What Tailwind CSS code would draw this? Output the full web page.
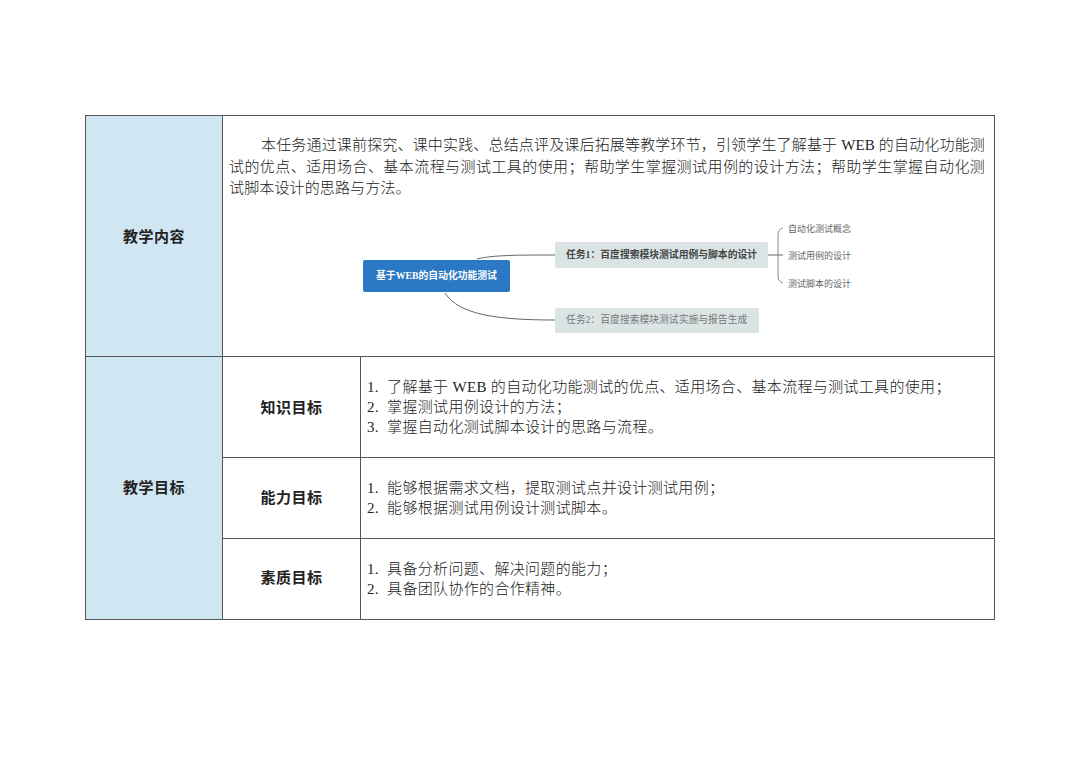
<!DOCTYPE html>
<html lang="zh-CN">
<head>
<meta charset="UTF-8">
<title>教学内容与教学目标</title>
<script src="https://cdn.jsdelivr.net/npm/@tailwindcss/browser@4"></script>
</head>
<body class="bg-white w-[1080px] h-[764px] overflow-hidden text-[#222] font-['Liberation_Serif','Noto_Sans_CJK_SC',serif]">
<div class="pt-[115px] pl-[85px]">
  <table class="w-[910px] table-fixed border-collapse text-[15px] leading-[21.5px]">
    <colgroup>
      <col class="w-[137px]">
      <col class="w-[138px]">
      <col>
    </colgroup>
    <tbody>
      <tr class="h-[241px]">
        <th class="border border-[#555] bg-[#d0e6f3] font-bold text-[15px] tracking-[0.5px] align-middle pt-[3px]">教学内容</th>
        <td colspan="2" class="border border-[#555] align-top p-0">
          <div class="h-[240px] flex flex-col">
            <p class="pt-[19px] pl-[6px] pr-[9px] text-justify indent-[32px] tracking-[0.14px] font-light">本任务通过课前探究、课中实践、总结点评及课后拓展等教学环节，引领学生了解基于 WEB 的自动化功能测试的优点、适用场合、基本流程与测试工具的使用；帮助学生掌握测试用例的设计方法；帮助学生掌握自动化测试脚本设计的思路与方法。</p>
            <!-- mind map -->
            <div class="relative flex-1">
              <svg class="absolute inset-0" width="772" height="175" fill="none" stroke="#666" stroke-width="1">
                <path d="M254 59 C270 55 295 55 332 55"/>
                <path d="M222 93 C236 115 275 120 332 120"/>
                <path d="M545 55 H560"/>
                <path d="M560 28 C556 29 555 32 555 36 V75 C555 79 556 82 560 83" stroke="#888"/>
              </svg>
              <div class="absolute left-[140px] top-[60px] w-[147px] h-[32px] rounded-[2px] bg-[#2b78c4] text-white text-[9.8px] font-bold flex items-center justify-center">基于WEB的自动化功能测试</div>
              <div class="absolute left-[332px] top-[42px] w-[213px] h-[26px] pl-[11px] rounded-[2px] bg-[#dbe4e4] text-[#444] text-[9.8px] font-bold flex items-center">任务1：百度搜索模块测试用例与脚本的设计</div>
              <div class="absolute left-[332px] top-[108px] w-[204px] h-[25px] pl-[11px] rounded-[2px] bg-[#dbe4e4] text-[#777] text-[9.8px] flex items-center">任务2：百度搜索模块测试实施与报告生成</div>
              <span class="absolute left-[565px] top-[22px] text-[9px] leading-[14px] text-[#666]">自动化测试概念</span>
              <span class="absolute left-[565px] top-[49px] text-[9px] leading-[14px] text-[#666]">测试用例的设计</span>
              <span class="absolute left-[565px] top-[77px] text-[9px] leading-[14px] text-[#666]">测试脚本的设计</span>
            </div>
          </div>
        </td>
      </tr>
      <tr class="h-[101px]">
        <th rowspan="3" class="border border-[#555] bg-[#d0e6f3] font-bold tracking-[0.5px] align-middle pt-[2px]">教学目标</th>
        <th class="border border-[#555] font-bold tracking-[0.5px] pt-[3px]">知识目标</th>
        <td class="border border-[#555] pl-[6px] pb-[1px] font-light">
          <ol class="tracking-[0.33px] leading-[20px]">
            <li>1.&nbsp; 了解基于 WEB 的自动化功能测试的优点、适用场合、基本流程与测试工具的使用；</li>
            <li>2.&nbsp; 掌握测试用例设计的方法；</li>
            <li>3.&nbsp; 掌握自动化测试脚本设计的思路与流程。</li>
          </ol>
        </td>
      </tr>
      <tr class="h-[81px]">
        <th class="border border-[#555] font-bold tracking-[0.5px] pt-[1px]">能力目标</th>
        <td class="border border-[#555] pl-[6px] font-light">
          <ol class="tracking-[0.33px] leading-[20px]">
            <li>1.&nbsp; 能够根据需求文档，提取测试点并设计测试用例；</li>
            <li>2.&nbsp; 能够根据测试用例设计测试脚本。</li>
          </ol>
        </td>
      </tr>
      <tr class="h-[81px]">
        <th class="border border-[#555] font-bold tracking-[0.5px]">素质目标</th>
        <td class="border border-[#555] pl-[6px] font-light">
          <ol class="tracking-[0.33px] leading-[20px]">
            <li>1.&nbsp; 具备分析问题、解决问题的能力；</li>
            <li>2.&nbsp; 具备团队协作的合作精神。</li>
          </ol>
        </td>
      </tr>
    </tbody>
  </table>
</div>
</body>
</html>
